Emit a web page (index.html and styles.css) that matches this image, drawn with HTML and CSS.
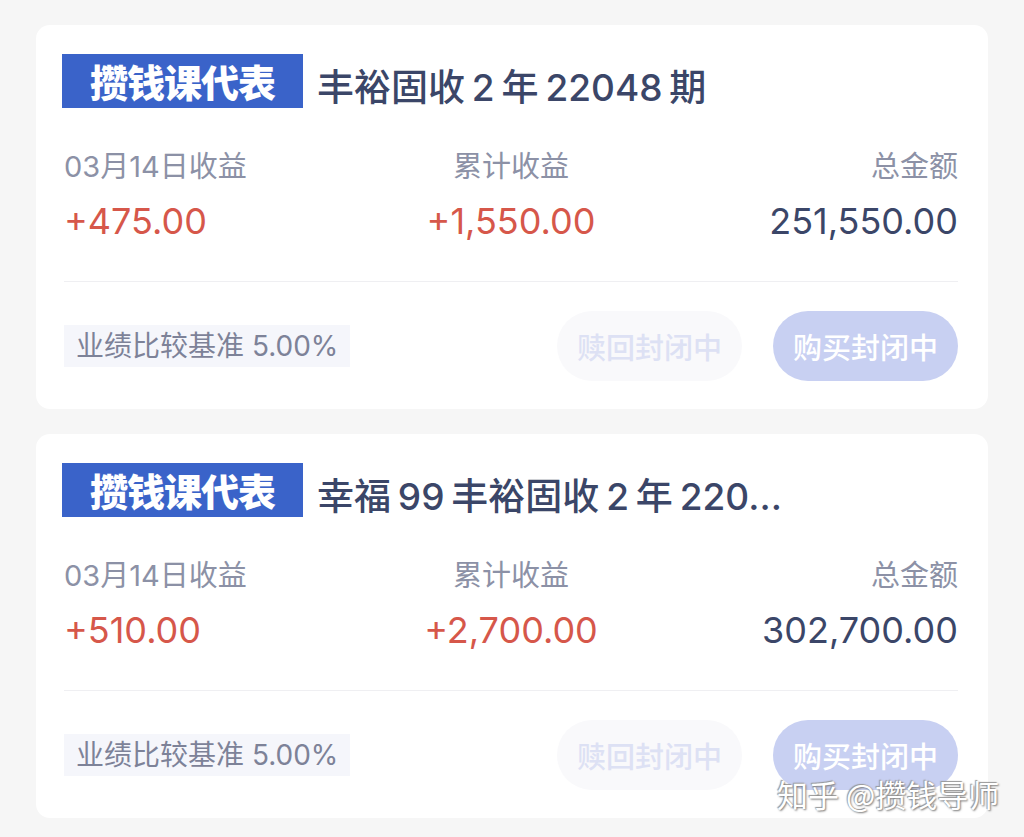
FILE: index.html
```html
<!DOCTYPE html>
<html lang="zh-CN">
<head>
  <meta charset="UTF-8">
  <title>持仓列表</title>
  <meta name="viewport" content="width=device-width, initial-scale=1.0" />
  <link rel="stylesheet" href="styles.css">
</head>
<body>

  <div class="list">

    <div class="card">
      <div class="card-head">
        <span class="badge">攒钱课代表</span>
        <span class="title">丰裕固收 2 年 22048 期</span>
      </div>
      <div class="stats">
        <div class="stat">
          <div class="label">03月14日收益</div>
          <div class="value up">+475.00</div>
        </div>
        <div class="stat center">
          <div class="label">累计收益</div>
          <div class="value up">+1,550.00</div>
        </div>
        <div class="stat right">
          <div class="label">总金额</div>
          <div class="value">251,550.00</div>
        </div>
      </div>
      <div class="card-foot">
        <span class="rate">业绩比较基准 5.00%</span>
        <div class="actions">
          <button class="btn btn-ghost">赎回封闭中</button>
          <button class="btn btn-solid">购买封闭中</button>
        </div>
      </div>
    </div>

    <div class="card">
      <div class="card-head">
        <span class="badge">攒钱课代表</span>
        <span class="title">幸福 99 丰裕固收 2 年 220...</span>
      </div>
      <div class="stats">
        <div class="stat">
          <div class="label">03月14日收益</div>
          <div class="value up">+510.00</div>
        </div>
        <div class="stat center">
          <div class="label">累计收益</div>
          <div class="value up">+2,700.00</div>
        </div>
        <div class="stat right">
          <div class="label">总金额</div>
          <div class="value">302,700.00</div>
        </div>
      </div>
      <div class="card-foot">
        <span class="rate">业绩比较基准 5.00%</span>
        <div class="actions">
          <button class="btn btn-ghost">赎回封闭中</button>
          <button class="btn btn-solid">购买封闭中</button>
        </div>
      </div>
    </div>

  </div>

  <div class="watermark">知乎 @攒钱导师</div>

</body>
</html>
```

FILE: styles.css
```css
:root {
  --bg: #f6f6f6;
  --navy: #3b4668;
  --muted: #8c91a6;
  --red: #d6574a;
  --blue: #3a63c9;
  --font-main: 'Inter', 'Noto Sans CJK SC', sans-serif;
  --font-cjk: 'Noto Sans CJK SC', sans-serif;
}

body {
  font-family: var(--font-main);
  margin: 0;
  height: 837px;
  overflow: hidden;
  background: var(--bg);
  position: relative;
}

.list {
  display: flex;
  flex-direction: column;
  gap: 25px;
  padding: 25px 36px 0 36px;
}

.card {
  background: #ffffff;
  border-radius: 14px;
  padding: 29px 30px 28px 26px;
  height: 384px;
  box-sizing: border-box;
}

.card-head {
  display: flex;
  align-items: center;
  height: 54px;
}

.badge {
  font-family: var(--font-cjk);
  background: var(--blue);
  color: #fff;
  font-size: 38px;
  font-weight: 900;
  height: 54px;
  line-height: 54px;
  width: 241px;
  text-align: center;
  letter-spacing: -1px;
}

.title {
  margin: 8px 0 0 14px;
  font-size: 37px;
  font-weight: 500;
  color: var(--navy);
  white-space: nowrap;
  word-spacing: -3px;
}

.stats {
  display: grid;
  grid-template-columns: 1fr 1fr 1fr;
  margin: 41px 0 0 2px;
  padding-bottom: 38px;
  border-bottom: 1px solid #efeff2;
}

.stat.center {
  text-align: center;
}

.stat.right {
  text-align: right;
}

.label {
  font-size: 29px;
  line-height: 36px;
  color: var(--muted);
}

.value {
  margin-top: 14px;
  font-size: 36px;
  line-height: 44px;
  color: var(--navy);
}

.value.up {
  color: var(--red);
}

.card-foot {
  display: flex;
  justify-content: space-between;
  align-items: center;
  margin: 29px 0 0 2px;
}

.rate {
  background: #f5f6fb;
  color: #7d8298;
  font-size: 28px;
  line-height: 42px;
  padding: 0 12px;
}

.actions {
  display: flex;
  gap: 31px;
}

.btn {
  font-family: var(--font-cjk);
  font-size: 29px;
  font-weight: 500;
  width: 185px;
  height: 70px;
  border: none;
  border-radius: 35px;
}

.btn-ghost {
  background: #f9f9fb;
  color: #dde1f4;
}

.btn-solid {
  background: #c8d0f2;
  color: #fff;
}

.watermark {
  position: absolute;
  left: 777px;
  top: 771px;
  font-family: var(--font-cjk);
  font-size: 31px;
  color: #fff;
  text-shadow: 1px 1px 2px #777, -1px -1px 1px #999;
}
```
